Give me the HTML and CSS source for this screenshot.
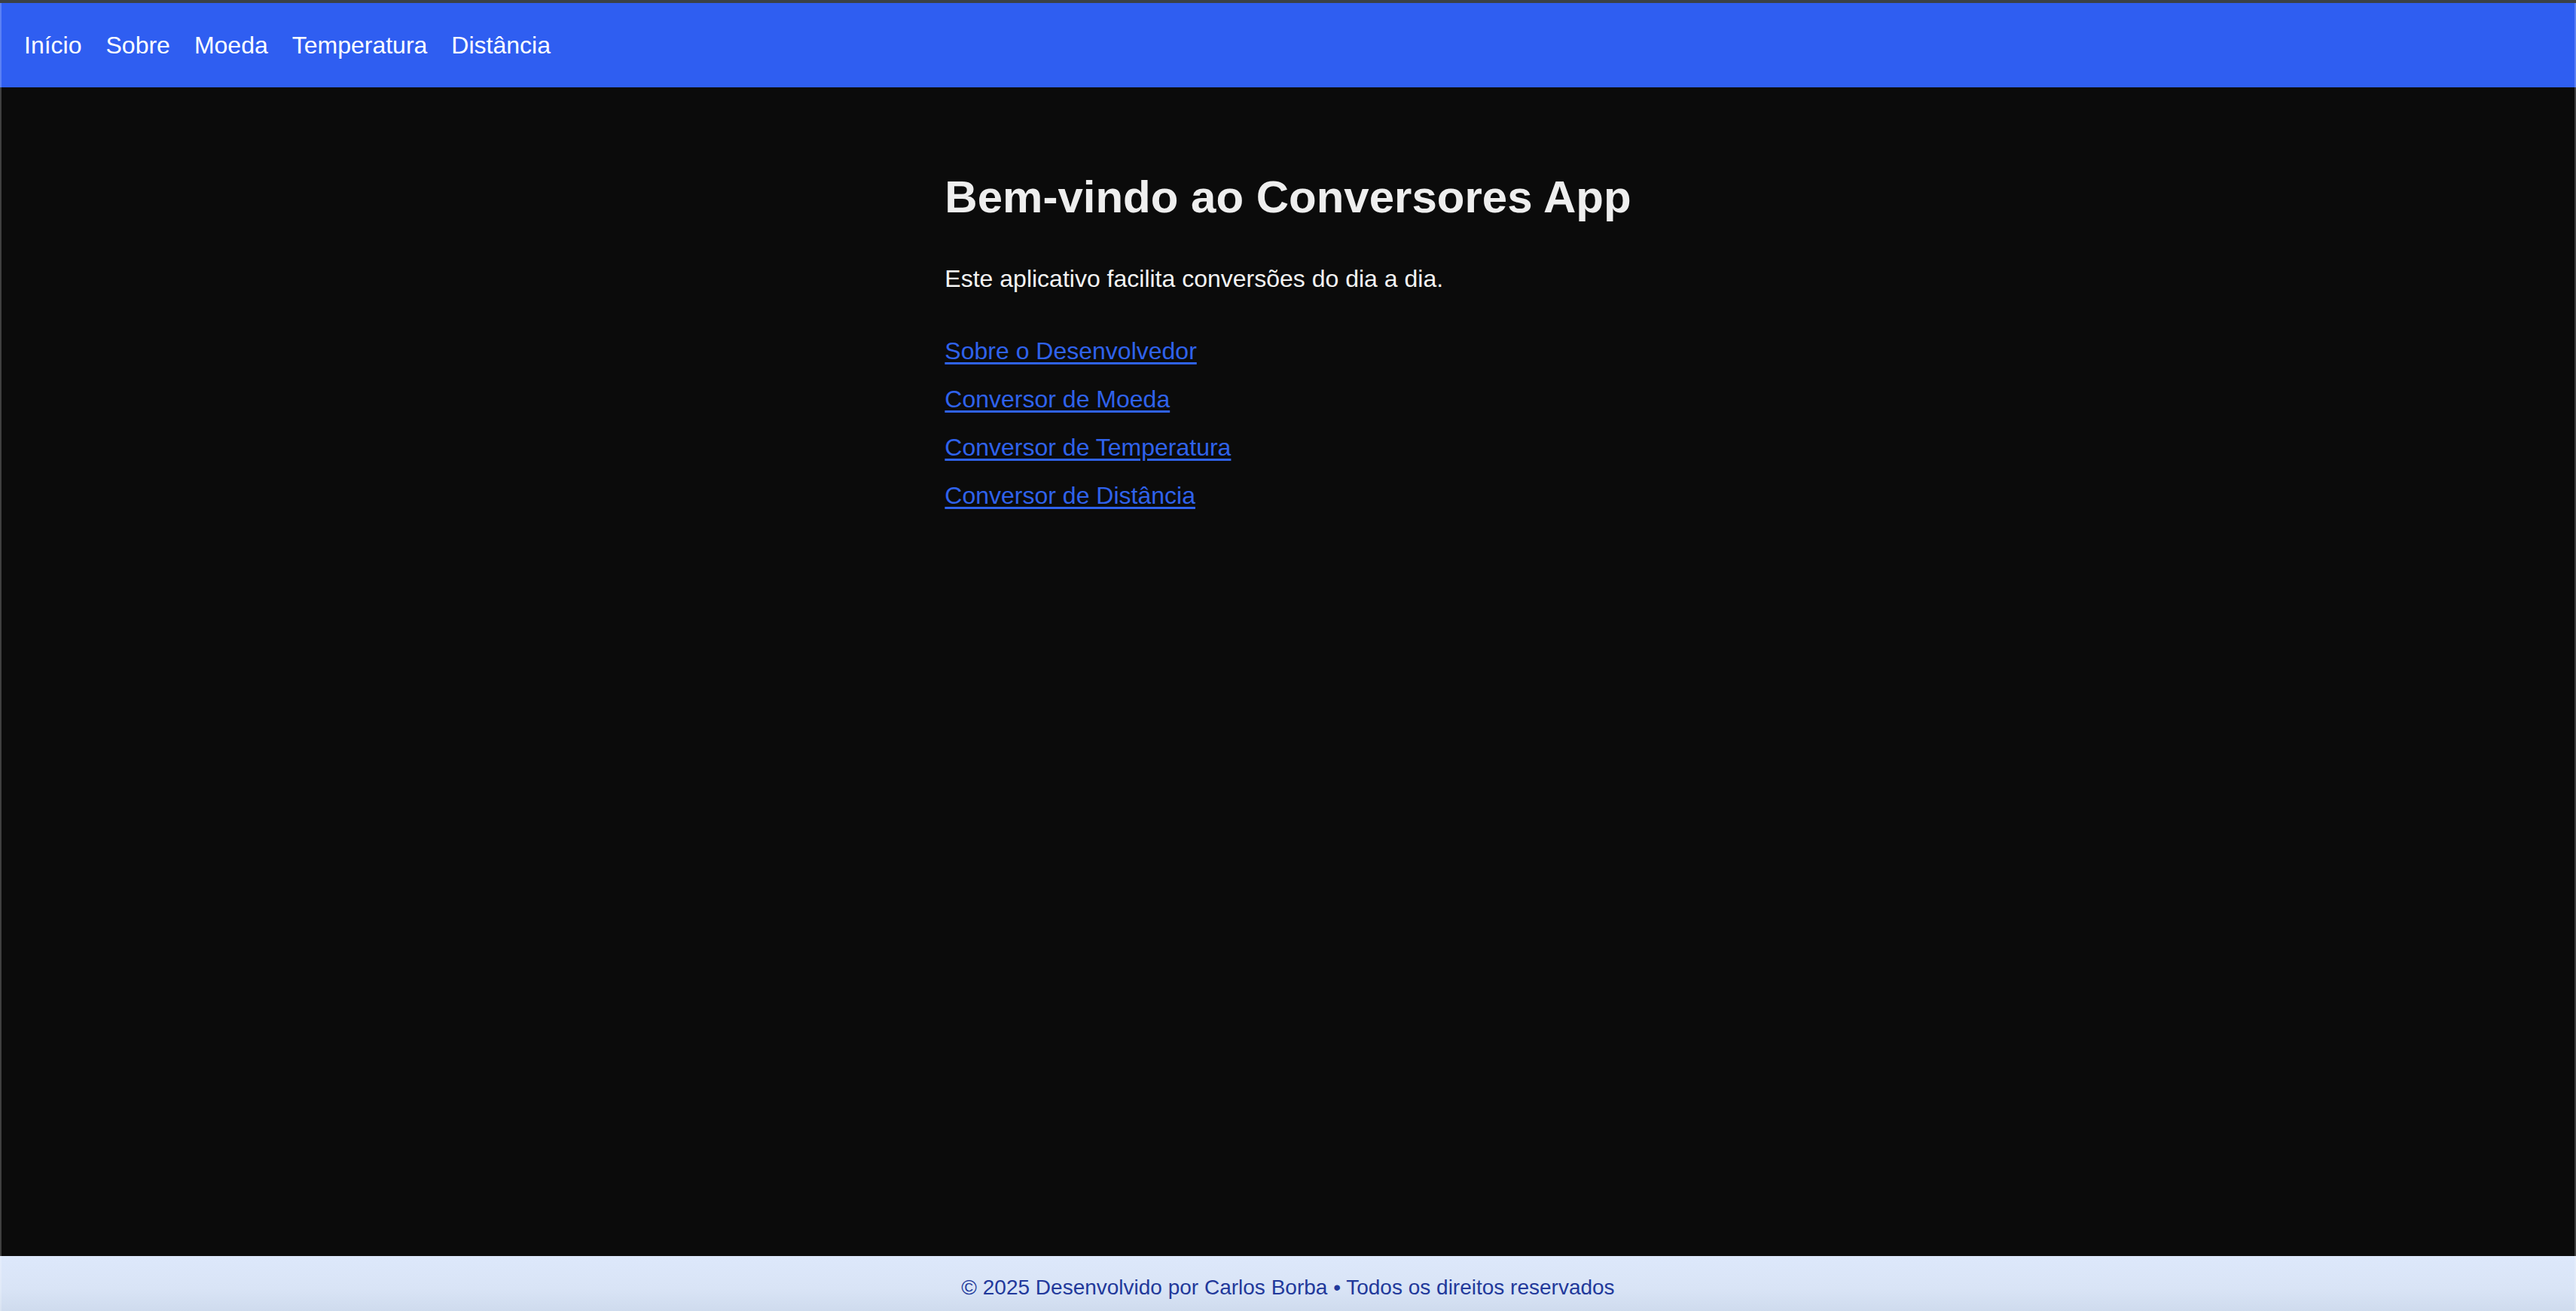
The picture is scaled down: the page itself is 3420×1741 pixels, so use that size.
FILE: index.html
```html
<!DOCTYPE html>
<html lang="pt-BR">
<head>
<meta charset="utf-8">
<title>Conversores App</title>
<link rel="stylesheet" href="styles.css">
</head>
<body>
<div class="frame"></div>
<nav class="topnav">
  <a href="#">Início</a>
  <a href="#">Sobre</a>
  <a href="#">Moeda</a>
  <a href="#">Temperatura</a>
  <a href="#">Distância</a>
</nav>
<main class="main">
  <section class="intro">
    <h1 class="title">Bem-vindo ao Conversores App</h1>
    <p class="lead">Este aplicativo facilita conversões do dia a dia.</p>
    <ul class="links">
      <li><a href="#">Sobre o Desenvolvedor</a></li>
      <li><a href="#">Conversor de Moeda</a></li>
      <li><a href="#">Conversor de Temperatura</a></li>
      <li><a href="#">Conversor de Distância</a></li>
    </ul>
  </section>
</main>
<footer class="footer">© 2025 Desenvolvido por Carlos Borba • Todos os direitos reservados</footer>
</body>
</html>
```
FILE: styles.css
```css
html, body {
  margin: 0;
  padding: 0;
}
body {
  background: #0b0b0b;
  font-family: "Liberation Sans", Arial, Helvetica, sans-serif;
  overflow: hidden;
  height: 1741px;
}
.frame {
  position: fixed;
  inset: 0;
  border-top: 4px solid #3b4146;
  border-left: 2px solid rgba(255, 255, 255, 0.22);
  border-right: 2px solid rgba(255, 255, 255, 0.22);
  pointer-events: none;
  z-index: 10;
}
.topnav {
  margin-top: 4px;
  background: #2f5ef1;
  padding: 32px 32px;
  display: flex;
  gap: 32px;
}
.topnav a {
  color: #ffffff;
  text-decoration: none;
  font-size: 32px;
  line-height: 48px;
}
.main {
  height: 1552px;
  box-sizing: border-box;
  padding-top: 110px;
}
.intro {
  width: fit-content;
  margin: 0 auto;
}
.title {
  margin: 0;
  font-size: 60px;
  line-height: 72px;
  font-weight: 700;
  color: #eeeeee;
}
.lead {
  margin: 48px 0 0;
  font-size: 32px;
  line-height: 48px;
  color: #f4f4f4;
}
.links {
  list-style: none;
  margin: 48px 0 0;
  padding: 0;
  display: flex;
  flex-direction: column;
  gap: 16px;
}
.links a {
  color: #2f62ec;
  font-size: 32px;
  line-height: 48px;
  text-decoration: underline;
  text-decoration-thickness: 3px;
  text-underline-offset: 4px;
}
.footer {
  background: linear-gradient(to bottom, #dde8fb 0%, #d9e4f6 50%, #cad7ea 100%);
  color: #22399b;
  text-align: center;
  font-size: 28px;
  line-height: 40px;
  padding: 22px 0 24px;
}
```
